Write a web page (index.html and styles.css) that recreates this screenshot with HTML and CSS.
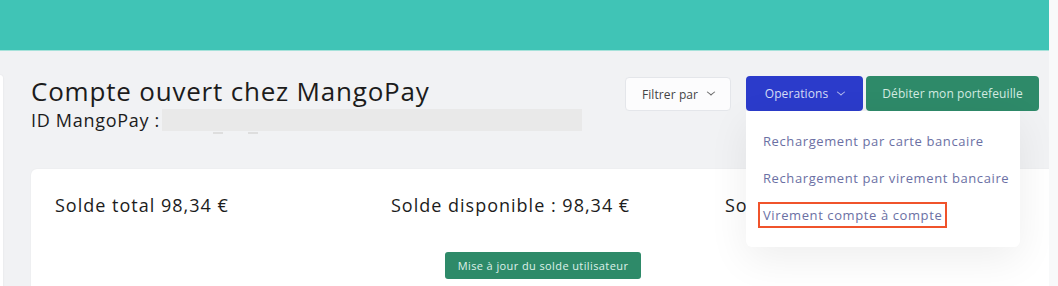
FILE: index.html
```html
<!DOCTYPE html>
<html lang="fr">
<head>
  <meta charset="UTF-8" />
  <meta name="viewport" content="width=device-width, initial-scale=1.0"/>
  <title>Compte MangoPay</title>
  <link rel="stylesheet" href="styles.css">
</head>
<body>
  <div class="frame">
    <div class="topbar"></div>
    <div class="page">
      <div class="side"></div>
      <main class="content">
        <div class="head">
          <div class="titles">
            <h1>Compte ouvert chez MangoPay</h1>
            <div class="mango-id">ID MangoPay : <span class="masked"><i></i><i></i></span></div>
          </div>
          <div class="actions">
            <button class="btn btn-light">Filtrer par <span class="chev"></span></button>
            <div class="dropdown">
              <button class="btn btn-blue">Operations <span class="chev"></span></button>
              <ul class="menu">
                <li>Rechargement par carte bancaire</li>
                <li>Rechargement par virement bancaire</li>
                <li><span class="marked">Virement compte à compte</span></li>
              </ul>
            </div>
            <button class="btn btn-green">Débiter mon portefeuille</button>
          </div>
        </div>

        <div class="card">
          <div class="balances">
            <div>Solde total 98,34 €</div>
            <div>Solde disponible : 98,34 €</div>
            <div>Solde bloqué : 0,00 €</div>
          </div>
          <div class="refresh">
            <button class="btn-small">Mise à jour du solde utilisateur</button>
          </div>
        </div>
      </main>
    </div>
  </div>
</body>
</html>
```

FILE: styles.css
```css
* { box-sizing: border-box; }
body {
  margin: 0;
  background: #f8f9fa;
  font-family: 'Open Sans', 'Noto Sans', sans-serif;
  color: #1c1c1c;
}
.frame {
  width: 1049px;
  height: 286px;
  overflow: hidden;
  background: #f1f2f4;
}
.topbar {
  height: 51px;
  background: #40c4b6;
  border-bottom: 1px solid #a6e2da;
}
.page {
  display: flex;
}
.side {
  flex: 0 0 3px;
  height: 300px;
  margin-top: 24px;
  background: #fff;
  border-top-right-radius: 4px;
  box-shadow: 0 0 2px rgba(0,0,0,0.08);
}
.content {
  flex: 1;
  min-width: 0;
  padding: 24px 0 0 28px;
}
.head {
  display: flex;
  justify-content: space-between;
  align-items: flex-start;
}
h1 {
  margin: 0;
  font-size: 26px;
  font-weight: 500;
  line-height: 32px;
  letter-spacing: 0.8px;
}
.mango-id {
  margin-top: 2px;
  font-size: 18px;
  font-weight: 500;
  line-height: 22px;
  letter-spacing: 0.7px;
  display: flex;
  align-items: flex-start;
  white-space: nowrap;
}
.masked {
  display: inline-block;
  position: relative;
  width: 420px;
  height: 22px;
  margin-left: 2px;
  background: #e9e9e9;
}
.masked i {
  position: absolute;
  top: 23px;
  width: 10px;
  height: 2px;
  background: #dedede;
}
.masked i:first-child { left: 51px; }
.masked i:last-child { left: 86px; }

.actions {
  display: flex;
  align-items: flex-start;
  margin-right: 10px;
  margin-top: 1px;
}
.btn {
  height: 35px;
  border: none;
  border-radius: 4px;
  font-family: inherit;
  font-size: 12px;
  font-weight: 500;
  letter-spacing: 0.1px;
  padding: 0;
  display: flex;
  align-items: center;
  justify-content: center;
  gap: 6px;
  cursor: pointer;
  white-space: nowrap;
}
.btn-light {
  width: 106px;
  background: #fcfcfd;
  color: #444;
  border: 1px solid #e4e6ea;
  height: 34px;
  margin-top: 1px;
  margin-right: 15px;
}
.btn-blue {
  width: 117px;
  background: #2b3bcb;
  color: #d6dbf6;
}
.btn-green {
  width: 173px;
  background: #2e8a69;
  color: #d3ebe1;
  margin-left: 3px;
}
.chev {
  width: 6px;
  height: 6px;
  border-right: 1px solid currentColor;
  border-bottom: 1px solid currentColor;
  transform: scaleY(0.8) rotate(45deg);
  margin: -4px 0 0 4px;
  opacity: 0.8;
}
.dropdown {
  position: relative;
}
.menu {
  position: absolute;
  top: 100%;
  left: 0;
  width: 274px;
  margin: 0;
  padding: 12px 0 13px;
  list-style: none;
  background: #fff;
  border-radius: 0 0 6px 6px;
  box-shadow: 0 12px 40px rgba(0,0,0,0.07);
  z-index: 2;
}
.menu li {
  padding: 0 17px;
  line-height: 37px;
  font-size: 13px;
  letter-spacing: 0.6px;
  color: #6b70a4;
  white-space: nowrap;
}
.marked {
  display: inline-block;
  line-height: 20px;
  padding: 1px 3px;
  margin-left: -5px;
  border: 2px solid #f0532b;
}

.card {
  margin-top: 38px;
  width: 1024px;
  height: 140px;
  background: #fff;
  border-radius: 6px;
  box-shadow: 0 0 2px rgba(0,0,0,0.06);
  padding: 21px 24px 0;
}
.balances {
  display: grid;
  grid-template-columns: 336px 334px 336px;
  font-size: 18px;
  line-height: 30px;
  letter-spacing: 1px;
  white-space: nowrap;
}
.refresh {
  margin-top: 32px;
  text-align: center;
}
.btn-small {
  width: 196px;
  height: 27px;
  border: none;
  border-radius: 3px;
  background: #2e8a69;
  color: #dff1e9;
  font-family: inherit;
  font-size: 11px;
  font-weight: 500;
  letter-spacing: 0.4px;
  padding: 0;
}
```
